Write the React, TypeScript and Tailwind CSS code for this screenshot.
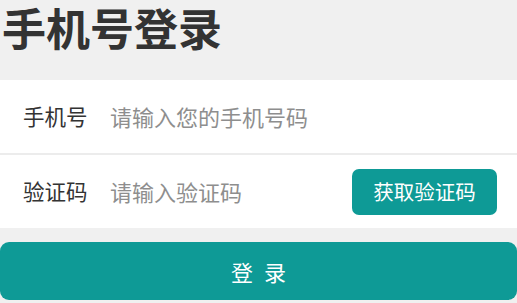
import React from "react";

export default function App() {
  const font = { fontFamily: '"Noto Sans CJK SC", "Noto Sans", sans-serif' };
  return (
    <div className="w-[517px] h-[303px] overflow-hidden bg-[#f0f0f0]" style={font}>
      <div className="h-[80px] pl-[2px] flex flex-col">
        <h1 className="text-[44px] font-bold leading-[62px] -mt-[4px] text-[#333]">手机号登录</h1>
      </div>
      <div className="bg-white">
        <div className="h-[75px] flex items-center pl-[23px] border-b-2 border-[#ececec]">
          <span className="w-[87px] text-[21.5px] text-[#333]">手机号</span>
          <input
            className="flex-1 text-[22px] text-[#333] outline-none placeholder:text-[#8e8e8e] bg-transparent"
            placeholder="请输入您的手机号码"
          />
        </div>
        <div className="h-[73px] flex items-center pl-[23px] pr-[20px]">
          <span className="w-[87px] text-[21.5px] text-[#333]">验证码</span>
          <input
            className="flex-1 min-w-0 text-[22px] text-[#333] outline-none placeholder:text-[#8e8e8e] bg-transparent"
            placeholder="请输入验证码"
          />
          <button className="w-[145px] h-[46px] rounded-[7px] bg-[#0e9a96] text-white text-[20.5px]">
            获取验证码
          </button>
        </div>
      </div>
      <div className="pt-[14px]">
        <button className="w-full h-[58px] rounded-[9px] bg-[#0e9a96] text-white text-[22px] tracking-[3px] pl-[3px]">
          登 录
        </button>
      </div>
    </div>
  );
}
